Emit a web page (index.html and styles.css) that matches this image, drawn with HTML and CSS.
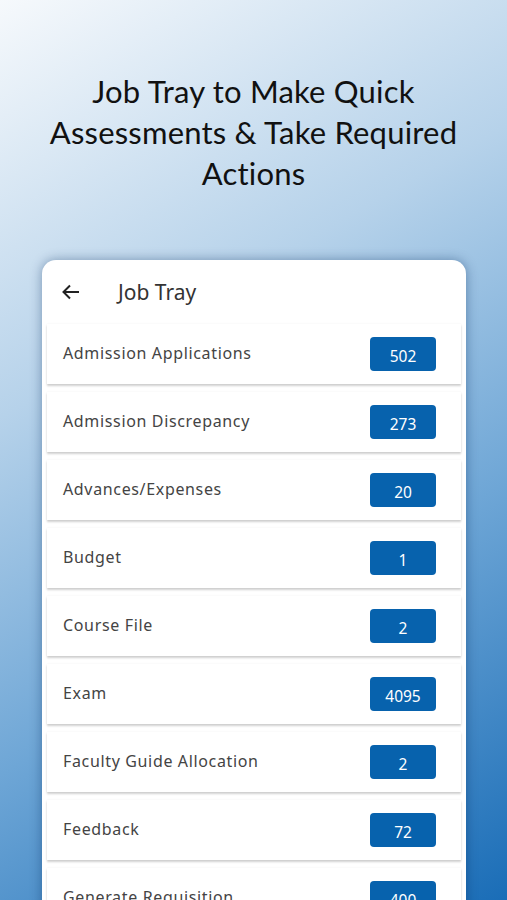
FILE: index.html
```html
<!DOCTYPE html>
<html lang="en">
  <head>
    <meta charset="utf-8" />
    <meta name="viewport" content="width=device-width, initial-scale=1" />
    <title>Job Tray</title>
    <link rel="stylesheet" href="styles.css">
  </head>
  <body>
    <div class="screen">
      <h1 class="headline">Job Tray to Make Quick<br />Assessments &amp; Take Required<br />Actions</h1>

      <div class="card">
        <div class="card-header">
          <svg class="back" width="18" height="16" viewBox="0 0 18 16">
            <path d="M17 8H2M8 1.5L1.5 8 8 14.5" fill="none" stroke="#222" stroke-width="2" />
          </svg>
          <span class="card-title">Job Tray</span>
        </div>

        <!-- job list -->
        <div class="job-list">
          <div class="job"><span class="job-name">Admission Applications</span><span class="count">502</span></div>
          <div class="job"><span class="job-name">Admission Discrepancy</span><span class="count">273</span></div>
          <div class="job"><span class="job-name">Advances/Expenses</span><span class="count">20</span></div>
          <div class="job"><span class="job-name">Budget</span><span class="count">1</span></div>
          <div class="job"><span class="job-name">Course File</span><span class="count">2</span></div>
          <div class="job"><span class="job-name">Exam</span><span class="count">4095</span></div>
          <div class="job"><span class="job-name">Faculty Guide Allocation</span><span class="count">2</span></div>
          <div class="job"><span class="job-name">Feedback</span><span class="count">72</span></div>
          <div class="job"><span class="job-name">Generate Requisition</span><span class="count">400</span></div>
        </div>
      </div>
    </div>
  </body>
</html>
```

FILE: styles.css
```css
html,
body {
  margin: 0;
  padding: 0;
}

body {
  width: 507px;
  height: 900px;
  overflow: hidden;
}

.screen {
  height: 900px;
  padding-top: 71px;
  box-sizing: border-box;
  background: linear-gradient(150deg, #f6f9fc 0%, #b6d2ea 35%, #6ea6d6 65%, #1a6db7 100%);
}

.headline {
  margin: 0;
  font-family: Lato, "Open Sans", sans-serif;
  font-weight: 400;
  font-size: 31px;
  letter-spacing: 0.2px;
  line-height: 41px;
  text-align: center;
  color: #111;
}

.card {
  width: 424px;
  margin: 66px 0 0 42px;
  padding: 0 5px;
  box-sizing: border-box;
  background-color: #fff;
  border-radius: 14px 14px 0 0;
  box-shadow: 0 0 12px rgba(0, 40, 90, 0.4);
  height: 700px;
}

.card-header {
  height: 64px;
  display: flex;
  align-items: center;
  padding-left: 15px;
}

.back {
  margin-right: 38px;
}

.card-title {
  font-family: "Noto Sans", sans-serif;
  font-size: 21px;
  color: #333;
}

.job-list {
  display: flex;
  flex-direction: column;
  gap: 8px;
}

.job {
  height: 60px;
  display: flex;
  align-items: center;
  justify-content: space-between;
  padding: 0 25px 0 16px;
  background-color: #fff;
  box-shadow: 0 2px 2px rgba(0, 0, 0, 0.18), 0 0 2px rgba(0, 0, 0, 0.06);
}

.job-name {
  font-family: "Noto Sans", sans-serif;
  font-size: 16px;
  letter-spacing: 0.65px;
  color: #444;
  margin-top: -2px;
}

.count {
  width: 66px;
  height: 34px;
  padding-top: 4px;
  box-sizing: border-box;
  display: flex;
  align-items: center;
  justify-content: center;
  background-color: #0762ad;
  border-radius: 4px;
  font-family: "Noto Sans", sans-serif;
  font-size: 15.5px;
  color: #fff;
}
```
